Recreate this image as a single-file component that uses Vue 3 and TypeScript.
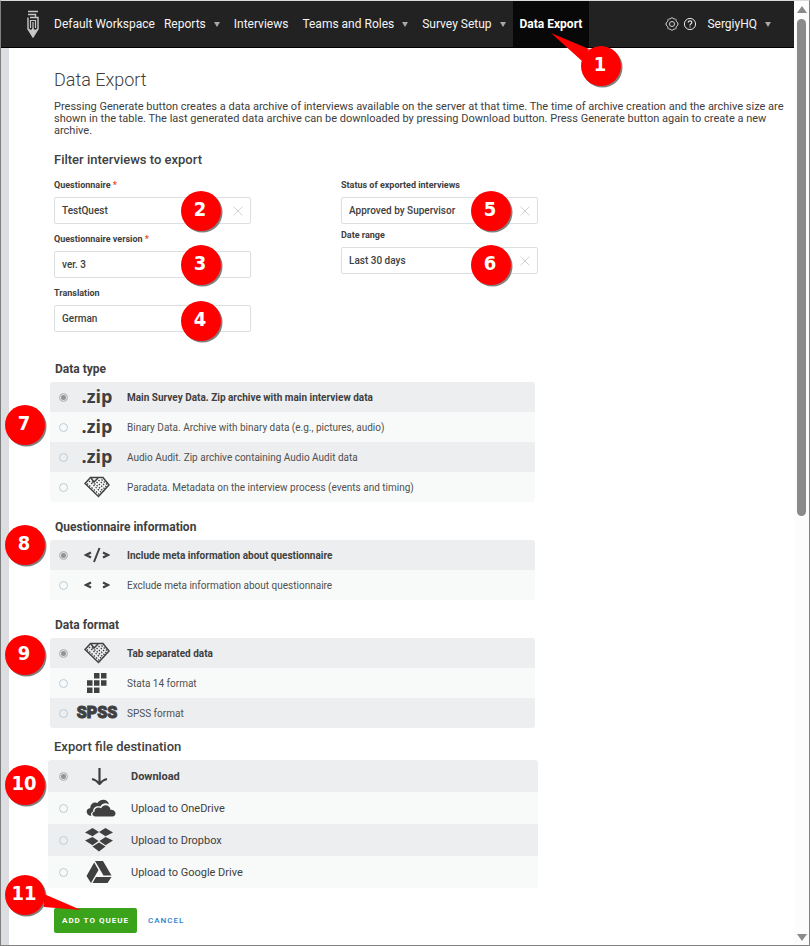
<script setup lang="ts">
import { ref } from 'vue'

interface NavItem { text: string; menu: boolean; active?: boolean }
interface Choice { value: string; icon: string; text: string }
interface Group { id: string; title: string; large?: boolean; choices: Choice[] }
interface Field { id: string; label: string; required?: boolean; value: string; clearable?: boolean }
interface Callout { n: number; x: number; y: number; tail?: string }

const nav: NavItem[] = [
  { text: 'Reports', menu: true },
  { text: 'Interviews', menu: false },
  { text: 'Teams and Roles', menu: true },
  { text: 'Survey Setup', menu: true },
  { text: 'Data Export', menu: false, active: true },
]

const leftFields: Field[] = [
  { id: 'questionnaire', label: 'Questionnaire', required: true, value: 'TestQuest', clearable: true },
  { id: 'version', label: 'Questionnaire version', required: true, value: 'ver. 3' },
  { id: 'translation', label: 'Translation', value: 'German' },
]
const rightFields: Field[] = [
  { id: 'status', label: 'Status of exported interviews', value: 'Approved by Supervisor', clearable: true },
  { id: 'range', label: 'Date range', value: 'Last 30 days', clearable: true },
]
const columns = [
  { id: 'left', fields: leftFields },
  { id: 'right', fields: rightFields },
]

const groups: Group[] = [
  {
    id: 'dataType', title: 'Data type', choices: [
      { value: 'main', icon: 'zip', text: 'Main Survey Data. Zip archive with main interview data' },
      { value: 'binary', icon: 'zip', text: 'Binary Data. Archive with binary data (e.g., pictures, audio)' },
      { value: 'audio', icon: 'zip', text: 'Audio Audit. Zip archive containing Audio Audit data' },
      { value: 'paradata', icon: 'tab', text: 'Paradata. Metadata on the interview process (events and timing)' },
    ],
  },
  {
    id: 'meta', title: 'Questionnaire information', choices: [
      { value: 'include', icon: 'code', text: 'Include meta information about questionnaire' },
      { value: 'exclude', icon: 'nocode', text: 'Exclude meta information about questionnaire' },
    ],
  },
  {
    id: 'format', title: 'Data format', choices: [
      { value: 'tabular', icon: 'tab', text: 'Tab separated data' },
      { value: 'stata', icon: 'stata', text: 'Stata 14 format' },
      { value: 'spss', icon: 'spss', text: 'SPSS format' },
    ],
  },
  {
    id: 'destination', title: 'Export file destination', large: true, choices: [
      { value: 'download', icon: 'download', text: 'Download' },
      { value: 'onedrive', icon: 'onedrive', text: 'Upload to OneDrive' },
      { value: 'dropbox', icon: 'dropbox', text: 'Upload to Dropbox' },
      { value: 'gdrive', icon: 'gdrive', text: 'Upload to Google Drive' },
    ],
  },
]

const selected = ref<Record<string, string>>({
  dataType: 'main', meta: 'include', format: 'tabular', destination: 'download',
})

// Centre of each numbered marker; the tail is drawn relative to that centre.
const callouts: Callout[] = [
  { n: 1, x: 601, y: 66, tail: 'M-50-33L-12-17L-19-5Z' },
  { n: 2, x: 201, y: 211 },
  { n: 3, x: 201, y: 265 },
  { n: 4, x: 201, y: 321 },
  { n: 5, x: 491, y: 211 },
  { n: 6, x: 491, y: 265 },
  { n: 7, x: 25, y: 425 },
  { n: 8, x: 25, y: 545 },
  { n: 9, x: 25, y: 655 },
  { n: 10, x: 25, y: 785 },
  { n: 11, x: 25, y: 895, tail: 'M56 15L19-1L19 12Z' },
]
</script>

<template>
  <div class="window">
    <div class="page">
      <header class="topbar">
        <svg class="logo" viewBox="0 0 12 28" width="12" height="28" aria-hidden="true">
          <path d="M1 1.500H11M1 4.500H8.500V7M3 7.500H11V19L6 27L1 19V7.500" fill="none" stroke="#c8c8c8" stroke-width="1.400" />
          <path d="M3.500 18V10.500H8.500V18M6 12V21" fill="none" stroke="#c8c8c8" stroke-width="1.200" />
          <path d="M1 18L6 27L11 18L8 20L6 18L4 20Z" fill="#c8c8c8" />
        </svg>
        <a href="#" class="workspace">Default Workspace</a>
        <nav class="nav">
          <a v-for="item in nav" :key="item.text" href="#" :class="{ active: item.active, menu: item.menu }">
            {{ item.text }}<i v-if="item.menu" class="caret"></i>
          </a>
        </nav>
        <div class="tools">
          <a href="#" aria-label="Settings">
            <svg viewBox="0 0 14 14" width="14" height="14" fill="none" stroke="#d4d4d4">
              <path d="M5.900 1.500L6.300.8H7.700L8.100 1.500L9.300 2L10.100 1.700L11.300 2.900L11 3.700L11.600 4.900L12.900 5.900V8.100L11.600 9.100L11 10.300L11.300 11.100L10.100 12.300L9.300 12L8.100 12.500L7.700 13.200H6.300L5.900 12.500L4.700 12L3.900 12.300L2.700 11.100L3 10.300L2.400 9.100L1.100 8.100V5.900L2.400 4.900L3 3.700L2.700 2.900L3.900 1.700L4.700 2Z" />
              <circle cx="7" cy="7" r="2.500" />
            </svg>
          </a>
          <a href="#" aria-label="Help">
            <svg viewBox="0 0 14 14" width="14" height="14" fill="none" stroke="#e4e4e4">
              <circle cx="7" cy="7" r="5.600" />
              <path d="M5.200 5.600C5.200 3.300 8.900 3.400 8.800 5.500C8.700 6.900 7 6.700 7 8.400M7 9.400V10.600" stroke-width="1.200" />
            </svg>
          </a>
          <a href="#" class="menu user">SergiyHQ<i class="caret"></i></a>
        </div>
      </header>

      <main class="content">
        <h1>Data Export</h1>
        <p class="intro">
          Pressing Generate button creates a data archive of interviews available on the server at that time. The time of archive creation and the archive size are shown in the table. The last generated data archive can be downloaded by pressing Download button. Press Generate button again to create a new archive.
        </p>

        <form @submit.prevent>
          <h2>Filter interviews to export</h2>
          <div class="filters">
            <div v-for="column in columns" :key="column.id" class="column" :class="column.id">
              <div v-for="field in column.fields" :key="field.id" class="field">
                <label :for="field.id">{{ field.label }} <span v-if="field.required" class="required">*</span></label>
                <div class="box">
                  <select :id="field.id"><option>{{ field.value }}</option></select>
                  <button v-if="field.clearable" type="button" class="clear" :aria-label="'Clear ' + field.label">
                    <svg viewBox="0 0 10 10" width="10" height="10"><path d="M.5.5L9.500 9.500M9.500.5L.5 9.500" fill="none" stroke="#cfd3d6" /></svg>
                  </button>
                </div>
              </div>
            </div>
          </div>

          <fieldset v-for="group in groups" :key="group.id" :class="{ large: group.large }">
            <legend>{{ group.title }}</legend>
            <div class="choices">
              <label v-for="choice in group.choices" :key="choice.value" class="choice">
                <input v-model="selected[group.id]" type="radio" :name="group.id" :value="choice.value" />
                <span class="icon" aria-hidden="true">
                  <span v-if="choice.icon === 'zip'" class="zip">.zip</span>
                  <span v-else-if="choice.icon === 'spss'" class="spss">SPSS</span>
                  <svg v-else-if="choice.icon === 'tab'" viewBox="0 0 26 22" width="26" height="22">
                    <path d="M1 7.500L6.500 1.500H19L25 9L14.500 20.500Z" fill="none" stroke="#404040" stroke-width="1.500" />
                    <path d="M7 2L10 6L14 2" fill="none" stroke="#404040" stroke-width="1.500" />
                    <path d="M5 5L18 17M3 7.500L16 19M8 5.500L20 15.500M12.500 6L21.500 13.500M14.500 4L23 11.500M17.500 3.500L23 8.500" fill="none" stroke="#404040" stroke-width="1.300" stroke-dasharray="1.500 1.500" />
                  </svg>
                  <svg v-else-if="choice.icon === 'code' || choice.icon === 'nocode'" viewBox="0 0 26 16" width="26" height="16" fill="none" stroke="#404040">
                    <path d="M7 5.500L2 8L7 10.500M19 5.500L24 8L19 10.500" stroke-width="2.300" />
                    <path v-if="choice.icon === 'code'" d="M15.500 1L10 15" stroke-width="2" />
                  </svg>
                  <svg v-else-if="choice.icon === 'stata'" viewBox="0 0 22 20" width="22" height="20" fill="#404040">
                    <path d="M8 0H13.500V5.500H8ZM15 0H20.500V5.500H15ZM1 7.200H6.500V12.700H1ZM8 7.200H13.500V12.700H8ZM15 7.200H20.500V12.700H15ZM1 14.500H6.500V20H1ZM8 14.500H13.500V20H8Z" />
                  </svg>
                  <svg v-else-if="choice.icon === 'download'" viewBox="0 0 18 18" width="18" height="18" fill="none" stroke="#404040" stroke-width="2.200">
                    <path d="M9.500 1V17M2 12Q6.500 13 9.500 17Q12.500 13 17 12" />
                  </svg>
                  <svg v-else-if="choice.icon === 'onedrive'" viewBox="-3 0 33 18" width="33" height="18" fill="#404040">
                    <path d="M5.500 17C-1 16-.5 9.500 4.300 9.300C4 4.500 8.500 2.300 11.500 4C14.500-.8 22-.3 23 5.400C19 3 15.500 5 14.500 7.500C9.500 6.500 6.500 9.500 7.300 12.500C4.800 13.500 4.500 15.500 5.500 17Z" />
                    <path d="M9.500 17.500C5.500 17 5.500 13.300 8.600 12.800C8 9.300 12 7.500 15 9.300C17.500 4.600 24 5.800 24.500 10.800C30.500 10.500 31 17 26.500 17.500Z" />
                  </svg>
                  <svg v-else-if="choice.icon === 'dropbox'" viewBox="0 0 28 24" width="28" height="24" fill="#404040">
                    <path d="M7.500 0L14 4L7.500 8.200L0 4.500ZM20.500 0L28 4.500L20.500 8.200L14 4ZM0 12.500L7.500 9L13.500 13L7.500 17.200ZM28 12.500L20.500 9L14.500 13L20.500 17.200ZM7.500 18.500L14 14.500L20.500 18.500L14 23.500Z" />
                  </svg>
                  <svg v-else viewBox="0 0 26 22" width="26" height="22" fill="#404040">
                    <path d="M9 0H17L25.500 14.500H17.500ZM8.200 1.500L12.500 9L5 22L.5 15ZM10 16H25.500L21.500 22H6.500Z" />
                  </svg>
                </span>
                <span class="text">{{ choice.text }}</span>
              </label>
            </div>
          </fieldset>

          <div class="actions">
            <button type="submit" class="primary">ADD TO QUEUE</button>
            <button type="button" class="link">CANCEL</button>
          </div>
        </form>
      </main>
    </div>

    <div class="scrollbar" aria-hidden="true">
      <i class="up"></i>
      <i class="thumb"></i>
      <i class="rest"></i>
      <i class="down"></i>
    </div>

    <svg
      v-for="c in callouts" :key="c.n" class="callout"
      :style="{ left: c.x + 'px', top: c.y + 'px' }"
      viewBox="0 0 1 1" width="1" height="1"
    >
      <circle cx="1.500" cy="1.500" r="20" fill="#808080" />
      <path v-if="c.tail" :d="c.tail" fill="#f00" />
      <circle cx="0" cy="0" r="20" fill="#f00" />
      <text x="-1" y="5" text-anchor="middle">{{ c.n }}</text>
    </svg>
  </div>
</template>

<style>
body {
  margin: 0;
  background: #fff;
}
</style>

<style scoped>
.window {
  position: relative;
  display: flex;
  box-sizing: border-box;
  min-height: 100vh;
  overflow: hidden;
  border: 1px solid #808080;
  border-top-color: #d9dcda;
  background: #fff;
  color: #404040;
  font-family: Roboto, "Liberation Sans", sans-serif;
}
.page {
  flex: 1;
  min-width: 0;
  display: flex;
  flex-direction: column;
}
a {
  color: inherit;
  text-decoration: none;
}

/* top bar */
.topbar {
  display: flex;
  align-items: center;
  height: 46px;
  padding: 0 23px 0 26px;
  border-bottom: 1px solid #000;
  background: #222;
  color: #f4f4f4;
  font-size: 12px;
  white-space: nowrap;
}
.logo {
  margin-right: 15px;
}
.nav {
  display: flex;
  align-self: stretch;
  margin-left: 2px;
}
.nav a {
  display: flex;
  align-items: center;
  padding: 0 7px;
}
.nav a.active {
  background: #080808;
  color: #fff;
  font-weight: 700;
}
.caret {
  margin-left: 8px;
  border: 3px solid transparent;
  border-top: 5px solid #a8a8a8;
  border-bottom: 0;
}
.tools {
  display: flex;
  align-items: center;
  gap: 4px;
  margin-left: auto;
}
.tools a {
  display: flex;
  align-items: center;
}
.user {
  margin-left: 6px;
}

/* content */
.content {
  flex: 1;
  padding: 21px 5px 12px 45px;
  border-left: 8px solid #dcdee2;
}
h1 {
  margin: 0 0 10px;
  font-size: 18px;
  font-weight: 300;
  line-height: 22px;
}
.intro {
  margin: 0 0 15px;
  font-size: 11px;
  line-height: 12px;
}
h2,
legend {
  margin: 0;
  padding: 0;
  font-size: 12px;
  font-weight: 700;
  line-height: 16px;
}
h2,
.large legend {
  font-size: 13px;
  font-weight: 500;
}
.filters {
  display: flex;
  gap: 90px;
  margin: 11px 0 29px;
}
.column {
  display: flex;
  flex-direction: column;
  gap: 9px;
  flex: 0 1 197px;
}
.column.right {
  gap: 5px;
}
.field {
  display: flex;
  flex-direction: column;
  gap: 6px;
}
.field label {
  font-size: 9px;
  font-weight: 700;
  line-height: 12px;
}
.required {
  color: #e74924;
}
.box {
  display: flex;
  align-items: center;
  box-sizing: border-box;
  height: 27px;
  padding: 0 7px;
  border: 1px solid #dcdfe0;
  border-radius: 2px;
}
select {
  flex: 1;
  min-width: 0;
  padding: 0;
  border: 0;
  background: none;
  appearance: none;
  color: inherit;
  font: 500 10px Roboto, "Liberation Sans", sans-serif;
}
.clear {
  display: flex;
  padding: 0;
  border: 0;
  background: none;
}

/* choice lists */
fieldset {
  min-width: 0;
  margin: 0 0 17px -4px;
  padding: 0;
  border: 0;
}
fieldset:nth-last-of-type(2) {
  margin-bottom: 11px;
}
legend {
  margin-left: 5px;
}
.choices {
  max-width: 485px;
  margin-top: 5px;
  overflow: hidden;
  border-radius: 3px;
}
.choice {
  display: flex;
  align-items: center;
  height: 30px;
  background: #edeef0;
  font-size: 10px;
  color: #505050;
}
.choice:nth-child(even) {
  background: #f8faf9;
}
.choice input {
  appearance: none;
  flex: none;
  box-sizing: border-box;
  width: 9px;
  height: 9px;
  margin: 0 0 0 9px;
  border: 1px solid #bccdd8;
  border-radius: 50%;
}
.choice input:checked {
  border-color: #c0c2c4;
  background: #939393;
  box-shadow: inset 0 0 0 1px #e4e5e6;
}
.choice input:checked ~ .text {
  color: #404040;
  font-weight: 700;
}
.icon {
  display: flex;
  justify-content: center;
  width: 40px;
  margin: 0 10px 0 9px;
  color: #404040;
}
.zip {
  padding-bottom: 2px;
  font: 700 18px/22px "Open Sans", sans-serif;
}
.spss {
  font: 900 16px/18px Roboto, sans-serif;
  -webkit-text-stroke: 1px #404040;
}
.large {
  margin: 0 0 20px -6px;
}
.large legend {
  margin-left: 6px;
}
.large .choices {
  max-width: 490px;
}
.large .choice {
  height: 32px;
  font-size: 11px;
  color: #404040;
}
.large input {
  margin-left: 11px;
}
.large .icon {
  margin: 0 12px 0 11px;
}

/* actions */
.actions {
  display: flex;
  gap: 11px;
}
.actions button {
  height: 25px;
  border: 0;
  border-radius: 2px;
  font: 700 8px Roboto, "Liberation Sans", sans-serif;
  letter-spacing: 1px;
}
.actions .primary {
  padding: 0 8px;
  background: #3aa21b;
  color: #fff;
}
.actions .link {
  padding: 0;
  background: none;
  color: #2a81cb;
  font-weight: 500;
}

/* scroll bar */
.scrollbar {
  display: flex;
  flex-direction: column;
  align-items: center;
  box-sizing: border-box;
  width: 15px;
  padding: 5px 0 4px;
  background: #fcfcfc;
}
.up,
.down {
  border: 5px solid transparent;
}
.up {
  margin-bottom: 6px;
  border-top: 0;
  border-bottom: 7px solid #8a8a8a;
}
.down {
  border-bottom: 0;
  border-top: 7px solid #8a8a8a;
}
.thumb {
  flex: 497;
  width: 9px;
  border-radius: 5px;
  background: #8a8a8a;
}
.rest {
  flex: 418;
}

/* numbered markers */
.callout {
  position: absolute;
  margin: -1px 0 0 -1px;
  overflow: visible;
  pointer-events: none;
}
.callout text {
  fill: #fff;
  font: 700 20px "DejaVu Sans Condensed", "DejaVu Sans", sans-serif;
}
</style>
